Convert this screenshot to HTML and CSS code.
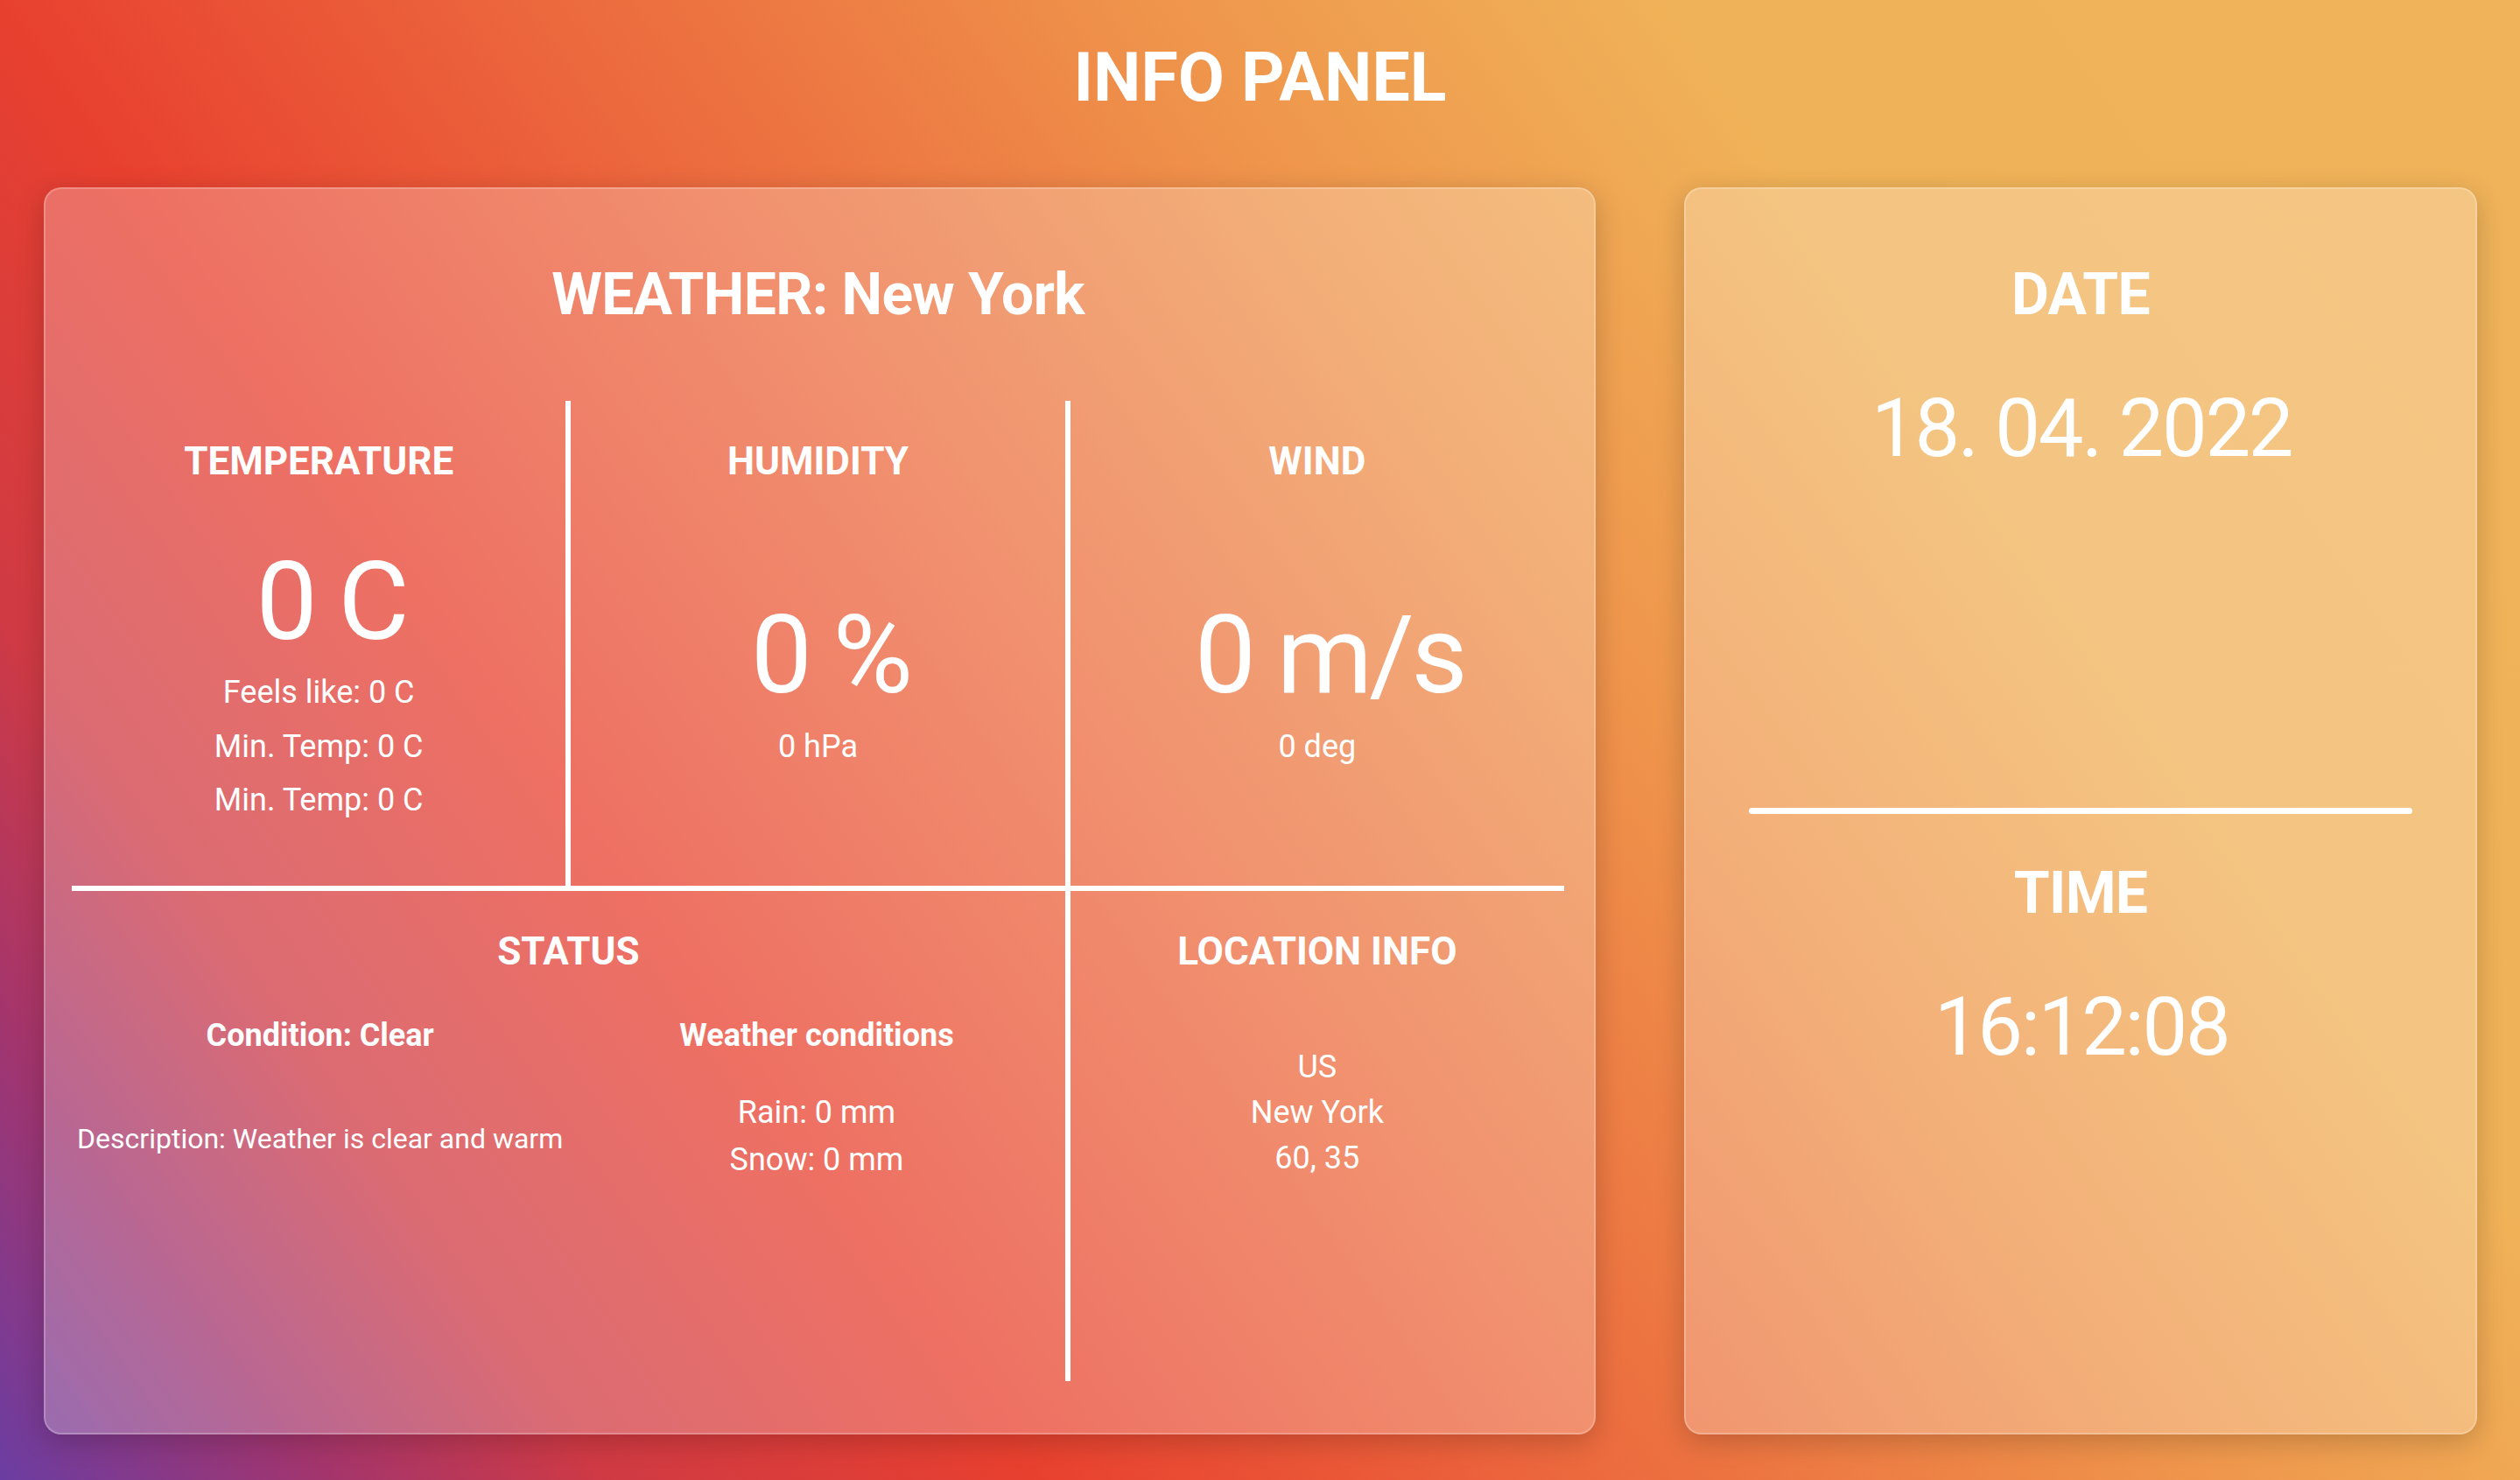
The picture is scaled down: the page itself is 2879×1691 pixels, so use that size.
FILE: index.html
```html
<!DOCTYPE html>
<html lang="en">
<head>
<meta charset="utf-8">
<title>Info Panel</title>
<link rel="stylesheet" href="styles.css">
</head>
<body>
  <h1 class="page-title">INFO PANEL</h1>
  <main class="panels">
    <section class="card weather">
      <h2 class="card-title">WEATHER: New York</h2>
      <div class="row row-top">
        <div class="cell cell-divided">
          <h3 class="cell-title">TEMPERATURE</h3>
          <div class="cell-body">
            <div class="big-value">0 C</div>
            <p class="line">Feels like: 0 C</p>
            <p class="line">Min. Temp: 0 C</p>
            <p class="line">Min. Temp: 0 C</p>
          </div>
        </div>
        <div class="cell cell-divided">
          <h3 class="cell-title">HUMIDITY</h3>
          <div class="cell-body">
            <div class="big-value">0 %</div>
            <p class="line">0 hPa</p>
          </div>
        </div>
        <div class="cell">
          <h3 class="cell-title">WIND</h3>
          <div class="cell-body">
            <div class="big-value">0 m/s</div>
            <p class="line">0 deg</p>
          </div>
        </div>
      </div>
      <div class="row row-bottom">
        <div class="cell cell-status cell-divided">
          <h3 class="cell-title">STATUS</h3>
          <div class="status-grid">
            <div class="status-sub">Condition: Clear</div>
            <div class="status-sub">Weather conditions</div>
            <div class="status-desc">Description: Weather is clear and warm</div>
            <div class="status-list">
              <p>Rain: 0 mm</p>
              <p>Snow: 0 mm</p>
            </div>
          </div>
        </div>
        <div class="cell cell-location">
          <h3 class="cell-title">LOCATION INFO</h3>
          <div class="loc-list">
            <p>US</p>
            <p>New York</p>
            <p>60, 35</p>
          </div>
        </div>
      </div>
    </section>
    <section class="card side">
      <div class="date-block">
        <h2 class="card-title side-title">DATE</h2>
        <div class="side-value">18. 04. 2022</div>
      </div>
      <div class="divider"></div>
      <div class="time-block">
        <h2 class="card-title side-title">TIME</h2>
        <div class="side-value">16:12:08</div>
      </div>
    </section>
  </main>
</body>
</html>
```
FILE: styles.css
```css
html, body {
  margin: 0;
}

body {
  box-sizing: border-box;
  min-height: 100vh;
  padding-top: 44px;
  font-family: Roboto, "Noto Sans", "Liberation Sans", sans-serif;
  color: #fff;
  background: linear-gradient(55deg,
    #6b3da2 0%,
    #a2356e 9%,
    #cf3a44 17%,
    #e8402f 29%,
    #ec6a3e 45%,
    #ef964c 62%,
    #f0b258 76%,
    #f0b35a 100%);
}

.page-title {
  margin: 0 0 80px;
  font-size: 77px;
  font-weight: 700;
  line-height: 1.172;
  text-align: center;
}

.panels {
  display: flex;
  justify-content: space-between;
  padding: 0 49px 0 50px;
  height: 1425px;
}

.card {
  box-sizing: border-box;
  height: 100%;
  border-radius: 20px;
  border: 2px solid rgba(255, 255, 255, 0.22);
  background: rgba(255, 255, 255, 0.25);
  box-shadow: 0 8px 32px rgba(0, 0, 0, 0.2);
}

.weather {
  width: 1773px;
  padding: 82px 34px 0 30px;
}

.card-title {
  margin: 0 0 83px;
  font-size: 66px;
  font-weight: 700;
  line-height: 77px;
  letter-spacing: -0.01em;
  text-align: center;
}

.row {
  display: flex;
}

.row-top {
  height: 554px;
  border-bottom: 6px solid #fff;
}

.row-bottom {
  height: 560px;
}

.cell {
  flex: 1 1 0;
  display: flex;
  flex-direction: column;
  padding-top: 44px;
  text-align: center;
}

.cell-divided {
  border-right: 6px solid #fff;
}

.cell-title {
  margin: 0;
  font-size: 44px;
  font-weight: 700;
  line-height: 51.5px;
}

.cell-body {
  flex: 1;
  display: flex;
  flex-direction: column;
  justify-content: center;
  padding-bottom: 5px;
}

.big-value {
  padding-left: 28px;
  font-size: 125px;
  line-height: 146.5px;
  letter-spacing: -0.03em;
}

.line {
  margin: 0;
  font-size: 36px;
  line-height: 61.5px;
}

.cell-status {
  flex: 0 0 calc((100% - 12px) * 2 / 3 + 6px);
}

.status-grid {
  display: grid;
  grid-template-columns: 1fr 1fr;
  row-gap: 40.6px;
  margin-top: 48px;
}

.status-sub {
  font-size: 36px;
  font-weight: 700;
  line-height: 42px;
}

.status-desc {
  margin-top: 39px;
  font-size: 32px;
  line-height: 37.5px;
}

.status-list p {
  margin: 0;
  font-size: 36px;
  line-height: 54px;
}

.loc-list {
  margin-top: 79px;
}

.loc-list p {
  margin: 0;
  font-size: 36px;
  line-height: 52px;
}

.side {
  width: 906px;
  padding: 82px 72px 0;
  text-align: center;
}

.date-block {
  height: 625px;
}

.side-title {
  margin-bottom: 60.7px;
}

.side-value {
  font-size: 92px;
  line-height: 107.8px;
  letter-spacing: -0.025em;
  text-indent: 0.025em;
}

.divider {
  height: 7px;
  border-radius: 4px;
  background: #fff;
}

.time-block {
  padding-top: 52px;
}
```
